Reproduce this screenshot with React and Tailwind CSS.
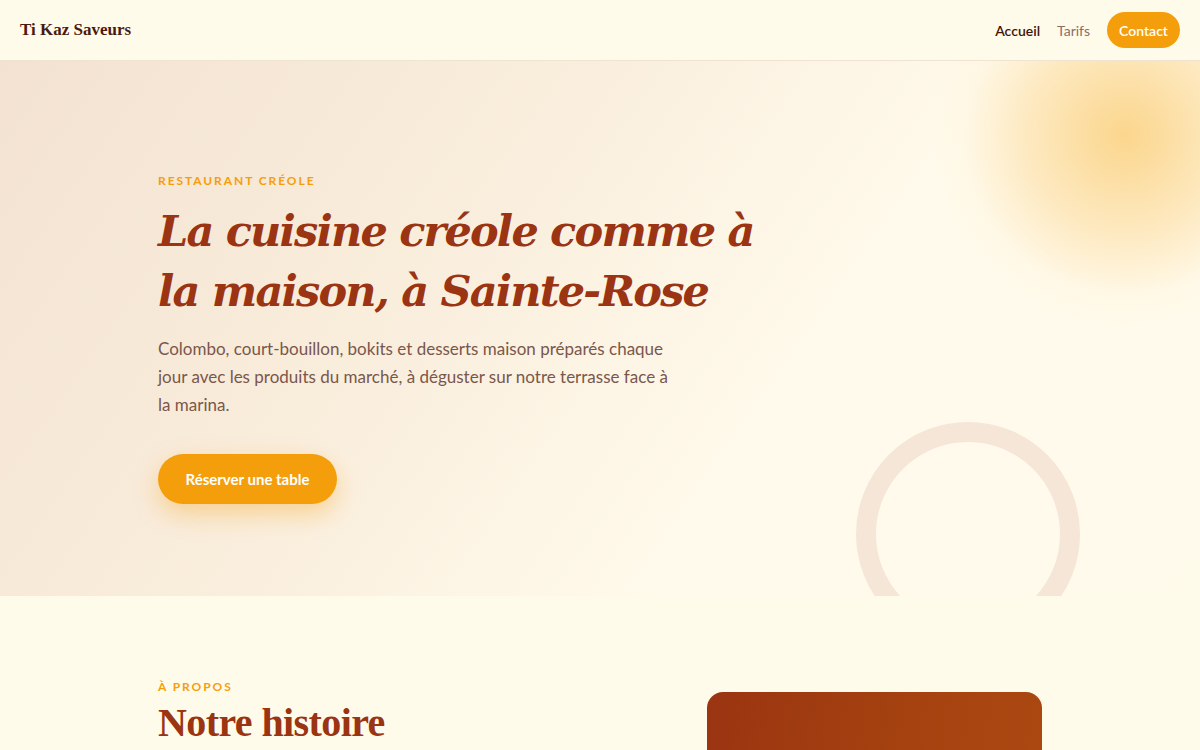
export default function App() {
  const display = { fontFamily: '"DejaVu Serif", serif' };
  const upright = { fontFamily: '"Liberation Serif", serif' };
  return (
    <div className="min-h-screen bg-[#fffbeb]" style={{ fontFamily: 'Lato, "Noto Sans", sans-serif' }}>
      <header className="h-[61px] flex items-center justify-between px-5 border-b border-[#efe3d2] bg-[#fffbeb]">
        <div className="text-[17px] font-bold text-[#4a1a0f]" style={upright}>Ti Kaz Saveurs</div>
        <nav className="flex items-center gap-[17px] text-[14px]">
          <a className="text-[#431407] font-semibold">Accueil</a>
          <a className="text-[#8b6e66]">Tarifs</a>
          <a className="h-9 px-[12px] rounded-full bg-[#f59e0b] text-white font-semibold flex items-center">Contact</a>
        </nav>
      </header>

      <section className="relative overflow-hidden h-[535px]" style={{ background: 'linear-gradient(125deg, #f3e2d1 0%, #f9eddc 35%, #fffaeb 65%, #fffbeb 100%)' }}>
        <div className="absolute left-[935px] top-[-116px] w-[380px] h-[380px] rounded-full" style={{ background: 'radial-gradient(circle, rgba(251,212,136,0.95) 0%, rgba(252,220,160,0.6) 35%, rgba(254,240,210,0.2) 60%, rgba(255,251,235,0) 72%)' }} />
        <div className="absolute left-[856px] top-[361px] w-[224px] h-[224px] rounded-full border-[20px] border-[#f6e6d8]" />
        <div className="relative w-[884px] mx-auto pt-[112px]">
          <div className="text-[12px] font-bold tracking-[0.16em] text-[#f59e0b] leading-4">RESTAURANT CRÉOLE</div>
          <h1 className="mt-3 text-[43px] leading-[60px] font-bold italic tracking-[-1.8px] text-[#9a3412]" style={display}>
            La cuisine créole comme à<br />la maison, à Sainte-Rose
          </h1>
          <p className="mt-[14px] max-w-[522px] text-[17px] leading-[28px] text-[#7a574b]">
            Colombo, court-bouillon, bokits et desserts maison préparés chaque jour avec les produits du marché, à déguster sur notre terrasse face à la marina.
          </p>
          <button className="mt-[35px] h-[50px] w-[179px] rounded-full bg-[#f59e0b] text-white text-[15px] font-bold shadow-[0_10px_24px_rgba(245,158,11,0.35)]">
            Réserver une table
          </button>
        </div>
      </section>

      <section className="bg-[#fffbeb]">
        <div className="w-[884px] mx-auto pt-[83px] flex justify-between">
          <div>
            <div className="text-[12px] font-bold tracking-[0.16em] text-[#f59e0b] leading-4">À PROPOS</div>
            <h2 className="mt-[6px] text-[40px] leading-[44px] font-bold tracking-[-0.6px] text-[#9a3412]" style={upright}>Notre histoire</h2>
          </div>
          <div className="mt-[13px] w-[335px] h-[300px] rounded-2xl" style={{ background: 'linear-gradient(100deg, #9a3412 0%, #a4410f 50%, #ad4a12 100%)' }} />
        </div>
      </section>
    </div>
  );
}
